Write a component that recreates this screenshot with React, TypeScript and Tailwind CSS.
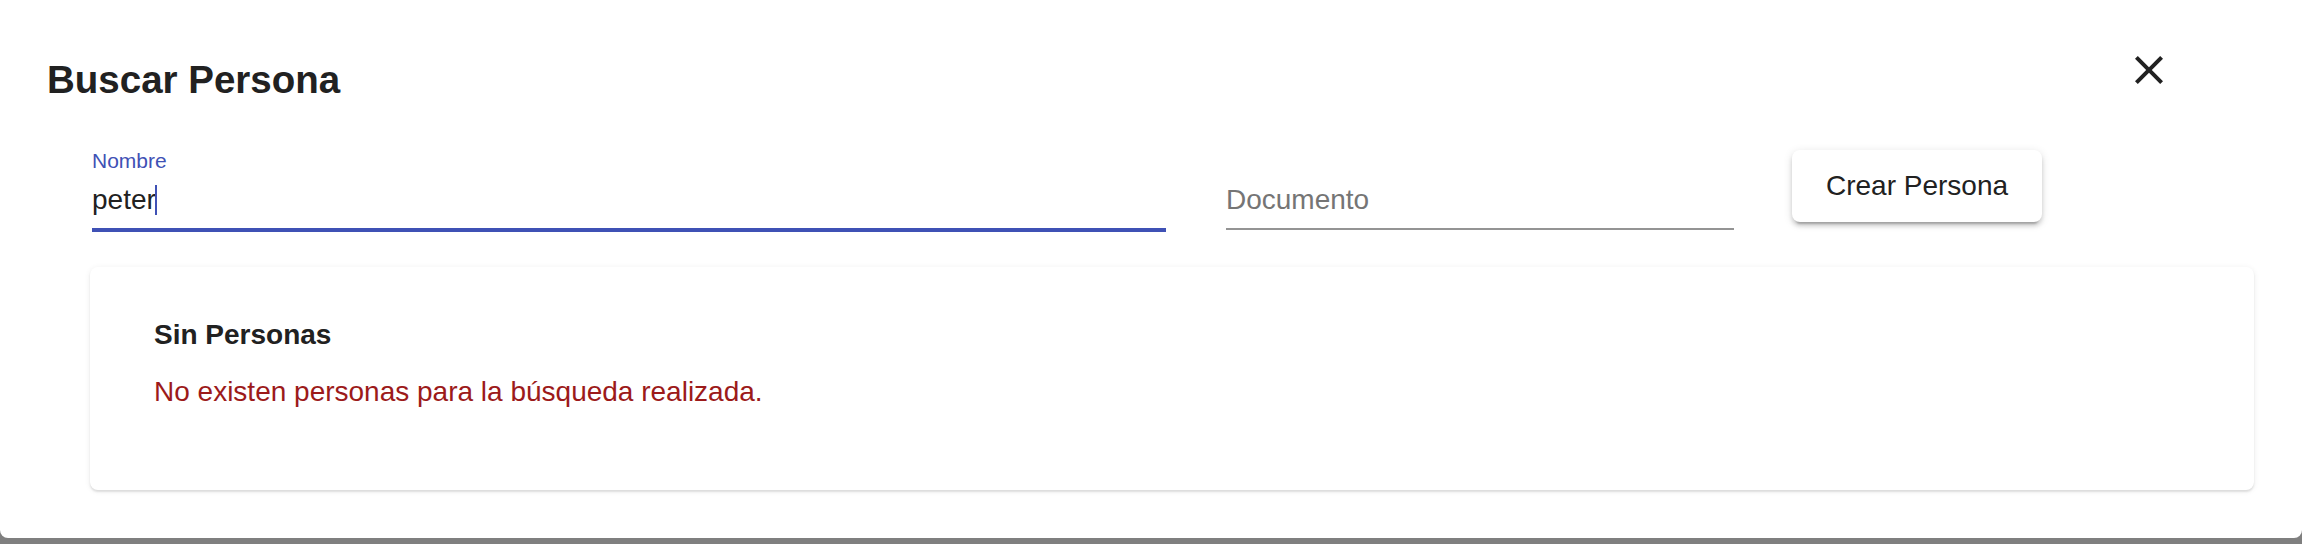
const font = { fontFamily: '"Liberation Sans", Arial, Helvetica, sans-serif' };

function CloseIcon() {
  return (
    <svg viewBox="0 0 24 24" className="w-12 h-12" fill="#212121">
      <path d="M19 6.41 17.59 5 12 10.59 6.41 5 5 6.41 10.59 12 5 17.59 6.41 19 12 13.41 17.59 19 19 17.59 13.41 12z" />
    </svg>
  );
}

export default function App() {
  return (
    <div className="w-[2302px] h-[544px] bg-[#7f7f7f] overflow-hidden" style={font}>
      <div className="relative h-[538px] bg-white rounded-b-[8px] flex flex-col">
        <button
          className="absolute right-[129px] top-[46px] flex items-center justify-center"
          title="Cerrar"
        >
          <CloseIcon />
        </button>

        <h2 className="pt-[48px] pl-[47px] text-[38.5px] leading-[64px] font-bold text-[#212121]">
          Buscar Persona
        </h2>

        <div className="flex items-start pl-[92px] pt-[37px]">
          {/* Nombre */}
          <div className="w-[1074px] flex flex-col">
            <label className="text-[21px] leading-[24px] text-[#3f51b5]">Nombre</label>
            <div className="mt-[9px] pb-[10px] border-b-4 border-[#3f51b5] flex items-center text-[28px] leading-[36px] text-[#212121]">
              <span>peter</span>
              <span className="w-[2px] h-[30px] bg-[#3f51b5] -ml-[1px]" />
            </div>
          </div>

          {/* Documento */}
          <div className="ml-[60px] w-[508px] flex flex-col">
            <div className="h-[24px]" />
            <div className="mt-[9px] pb-[10px] border-b-2 border-[#949494] text-[28px] leading-[36px] text-[#757575]">
              Documento
            </div>
          </div>

          <button className="ml-[58px] mt-[1px] w-[250px] h-[72px] rounded-[8px] bg-white text-[28px] font-medium text-[#212121] shadow-[0_6px_2px_-4px_rgba(0,0,0,0.2),0_4px_4px_0_rgba(0,0,0,0.14),0_2px_10px_0_rgba(0,0,0,0.12)]">
            Crear Persona
          </button>
        </div>

        <div className="ml-[90px] mt-[35px] w-[2164px] h-[223px] rounded-[8px] bg-white shadow-[0_2px_2px_0_rgba(0,0,0,0.1),0_1px_6px_0_rgba(0,0,0,0.07)] pt-[47px] pl-[64px]">
          <p className="text-[28px] leading-[42px] font-bold text-[#212121]">Sin Personas</p>
          <p className="mt-[15px] text-[28px] leading-[42px] text-[#9c1a1a]">
            No existen personas para la búsqueda realizada.
          </p>
        </div>
      </div>
    </div>
  );
}
